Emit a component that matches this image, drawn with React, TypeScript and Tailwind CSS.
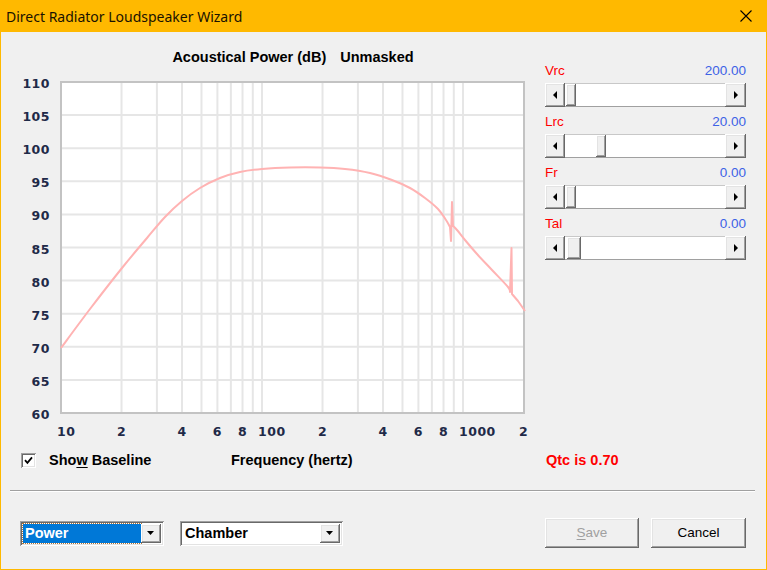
import type { ReactNode } from 'react';

const X0 = 61;
const DEC = 201;
const Y0 = 82;
const STEP = 33.1;

const fx = (f: number) => X0 + DEC * Math.log10(f / 10);

const gridFreqs = [20, 30, 40, 50, 60, 70, 80, 90, 100, 200, 300, 400, 500, 600, 700, 800, 900, 1000];

type Pt = [number, number];

// smooth catmull-rom through the points
const smooth = (pts: Pt[]) => {
  let d = `M${pts[0][0]},${pts[0][1]}`;
  for (let i = 0; i < pts.length - 1; i++) {
    const p0 = pts[i - 1] ?? pts[i];
    const p1 = pts[i];
    const p2 = pts[i + 1];
    const p3 = pts[i + 2] ?? p2;
    const c1 = [p1[0] + (p2[0] - p0[0]) / 6, p1[1] + (p2[1] - p0[1]) / 6];
    const c2 = [p2[0] - (p3[0] - p1[0]) / 6, p2[1] - (p3[1] - p1[1]) / 6];
    d += ` C${c1[0]},${c1[1]} ${c2[0]},${c2[1]} ${p2[0]},${p2[1]}`;
  }
  return d;
};

const partA: Pt[] = [
  [61, 348], [90, 309], [122, 268], [147, 238], [165, 217], [182, 201], [200, 188], [220, 178],
  [240, 172], [262, 169], [290, 167.5], [320, 167.5], [345, 169], [370, 173], [392, 180],
  [410, 188], [425, 198], [438, 209], [446, 220], [450, 227],
];
const partB: Pt[] = [[453, 226], [457, 230], [465, 240], [477, 254], [492, 270], [508, 287], [510, 292]];

const curvePath =
  smooth(partA) +
  ' L451,241 L452,202 L453,226' +
  smooth(partB).replace(/^M[^ ]+/, '') +
  ' L511.5,248 L512,294 L518,301 L525,311';

const xLabels: { t: string; x: number; anchor: 'start' | 'middle' }[] = [
  { t: '10', x: 57, anchor: 'start' },
  { t: '2', x: fx(20), anchor: 'middle' },
  { t: '4', x: fx(40), anchor: 'middle' },
  { t: '6', x: fx(60), anchor: 'middle' },
  { t: '8', x: fx(80), anchor: 'middle' },
  { t: '100', x: 258, anchor: 'start' },
  { t: '2', x: fx(200), anchor: 'middle' },
  { t: '4', x: fx(400), anchor: 'middle' },
  { t: '6', x: fx(600), anchor: 'middle' },
  { t: '8', x: fx(800), anchor: 'middle' },
  { t: '1000', x: 459, anchor: 'start' },
  { t: '2', x: fx(2000), anchor: 'middle' },
];

const Chart = () => (
  <svg width={530} height={366} viewBox="1 76 530 366" className="block">
    <rect x={61} y={82} width={463} height={331} fill="#ffffff" />
    {Array.from({ length: 9 }, (_, i) => (
      <line key={i} x1={61} x2={524} y1={Y0 + (i + 1) * STEP} y2={Y0 + (i + 1) * STEP} stroke="#e6e6e6" strokeWidth={2} />
    ))}
    {gridFreqs.map((f) => (
      <line key={f} x1={fx(f)} x2={fx(f)} y1={82} y2={413} stroke="#e6e6e6" strokeWidth={2} />
    ))}
    <rect x={61} y={82} width={463} height={331} fill="none" stroke="#c3c3c3" strokeWidth={2} />
    <path d={curvePath} fill="none" stroke="#ffb3b3" strokeWidth={2} strokeLinejoin="round" />
    <g fontFamily="'DejaVu Sans', sans-serif" fontWeight="bold" fontSize={12.5} fill="#1f2a48" letterSpacing={0.5}>
      {Array.from({ length: 11 }, (_, i) => (
        <text key={i} x={50} y={Y0 + i * STEP + 1.5} textAnchor="end" dominantBaseline="central">
          {110 - i * 5}
        </text>
      ))}
      {xLabels.map((l, i) => (
        <text key={i} x={l.x} y={431} textAnchor={l.anchor} dominantBaseline="central">
          {l.t}
        </text>
      ))}
    </g>
  </svg>
);

const raised =
  'shadow-[inset_-1px_-1px_0_#696969,inset_1px_1px_0_#ffffff,inset_-2px_-2px_0_#a0a0a0,inset_2px_2px_0_#e3e3e3]';
const sunken =
  'shadow-[inset_1px_1px_0_#a0a0a0,inset_-1px_-1px_0_#ffffff,inset_2px_2px_0_#696969,inset_-2px_-2px_0_#e3e3e3]';

const Arrow = ({ dir }: { dir: 'left' | 'right' | 'down' }) => {
  if (dir === 'down')
    return (
      <svg width={8} height={4} viewBox="0 0 8 4">
        <path d="M0 0H7L3.5 4Z" fill="#000" />
      </svg>
    );
  return (
    <svg width={4} height={8} viewBox="0 0 4 8">
      <path d={dir === 'left' ? 'M4 0V8L0 4Z' : 'M0 0V8L4 4Z'} fill="#000" />
    </svg>
  );
};

const Slider = ({ name, value, offset, thumb }: { name: string; value: string; offset: number; thumb: number }) => (
  <div>
    <div className="flex h-[14px] items-center justify-between text-[13.5px] leading-[14px]">
      <span className="text-[#ff0000]">{name}</span>
      <span className="text-[#3d62e6]">{value}</span>
    </div>
    <div className="mt-[5px] flex h-[24px]">
      <div className={`flex w-[20px] items-center justify-center bg-[#f0f0f0] ${raised}`}>
        <Arrow dir="left" />
      </div>
      <div className="flex flex-1 border-t border-b border-t-[#c8c8c8] border-b-[#a0a0a0] bg-white">
        <div className={`h-full bg-[#f0f0f0] ${raised}`} style={{ marginLeft: offset, width: thumb }} />
      </div>
      <div className={`flex w-[21px] items-center justify-center bg-[#f0f0f0] ${raised}`}>
        <Arrow dir="right" />
      </div>
    </div>
  </div>
);

const Combo = ({ width, children }: { width: string; children: ReactNode }) => (
  <div className={`flex h-[25px] items-center bg-white p-[3px] ${width} ${sunken}`}>
    <div className="flex h-full min-w-0 flex-1 items-center">{children}</div>
    <div className={`flex h-full w-[20px] items-center justify-center bg-[#f0f0f0] ${raised}`}>
      <Arrow dir="down" />
    </div>
  </div>
);

export default function App() {
  return (
    <div className="flex h-[570px] w-[767px] flex-col bg-[#ffb900] font-['Liberation_Sans',Arial,sans-serif] text-black">
      <div className="flex h-[32px] shrink-0 items-center justify-between pl-[6px] pr-[15px]">
        <span className="font-['Noto_Sans',sans-serif] text-[14px] text-[#1a1200]">Direct Radiator Loudspeaker Wizard</span>
        <svg width={12} height={12} viewBox="0 0 12 12">
          <path d="M0.5 0.5L11.5 11.5M11.5 0.5L0.5 11.5" stroke="#000" strokeWidth={1.1} />
        </svg>
      </div>

      <div className="mx-px mb-px flex flex-1 flex-col bg-[#f0f0f0]">
        <div className="flex">
          <div className="w-[530px]">
            <div className="ml-[60px] mt-[17px] flex h-[16px] w-[464px] items-center justify-center gap-[14px] text-[14.5px] font-bold leading-[16px]">
              <span>Acoustical Power (dB)</span>
              <span>Unmasked</span>
            </div>
            <div className="mt-[11px]">
              <Chart />
            </div>
          </div>
          <div className="ml-[14px] flex w-[201px] flex-col gap-[8px] pt-[32px]">
            <Slider name="Vrc" value="200.00" offset={1} thumb={10} />
            <Slider name="Lrc" value="20.00" offset={31} thumb={10} />
            <Slider name="Fr" value="0.00" offset={1} thumb={10} />
            <Slider name="Tal" value="0.00" offset={2} thumb={14} />
          </div>
        </div>

        <div className="mt-[10px] flex h-[17px] items-center pl-[20px] text-[14.5px] font-bold">
          <div className={`flex h-[15px] w-[15px] items-center justify-center bg-white ${sunken}`}>
            <svg width={9} height={9} viewBox="0 0 9 9">
              <path d="M1 4.2L3.4 6.8L8 1.4" fill="none" stroke="#000" strokeWidth={1.8} />
            </svg>
          </div>
          <span className="ml-[13px] w-[182px]">
            Sho<span className="underline underline-offset-2">w</span> Baseline
          </span>
          <span className="w-[315px]">Frequency (hertz)</span>
          <span className="text-[#ff0000]">Qtc is 0.70</span>
        </div>

        <div className="ml-[9px] mt-[21px] h-[2px] w-[745px] border-t border-b border-t-[#a0a0a0] border-b-[#ffffff]" />

        <div className="mt-[26px] flex items-center pl-[19px] pr-[20px] text-[14.5px]">
          <Combo width="w-[144px]">
            <div className="flex h-[19px] w-full items-center bg-[#0078d7] px-[2px] pt-[2px] font-bold text-white outline outline-1 outline-dotted outline-[#b07030]">
              Power
            </div>
          </Combo>
          <div className="ml-[16px]">
            <Combo width="w-[163px]">
              <span className="pl-[2px] pt-[2px] font-bold">Chamber</span>
            </Combo>
          </div>
          <div className={`ml-auto flex h-[30px] w-[94px] items-center justify-center bg-[#f0f0f0] text-[13.5px] text-[#a0a0a0] ${raised}`}>
            <span className="underline underline-offset-2">S</span>ave
          </div>
          <div className={`ml-[12px] flex h-[30px] w-[95px] items-center justify-center bg-[#f0f0f0] text-[13.5px] ${raised}`}>
            Cancel
          </div>
        </div>
      </div>
    </div>
  );
}
